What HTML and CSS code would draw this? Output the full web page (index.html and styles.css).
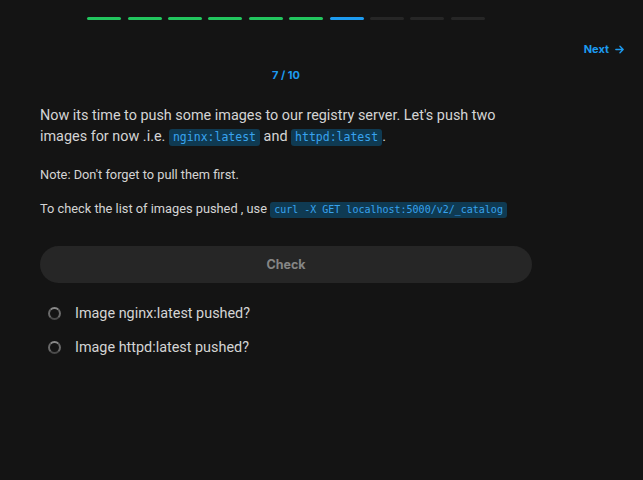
FILE: index.html
```html
<!DOCTYPE html>
<html>
<head>
<meta charset="utf-8">
<link rel="stylesheet" href="styles.css">
</head>
<body>
<div class="page">
  <div class="progress">
    <span class="seg done"></span><span class="seg done"></span><span class="seg done"></span><span class="seg done"></span><span class="seg done"></span><span class="seg done"></span><span class="seg current"></span><span class="seg"></span><span class="seg"></span><span class="seg"></span>
  </div>
  <div class="nav">
    <a class="next">Next
      <svg width="11" height="11" viewBox="0 0 12 12" fill="none" stroke="currentColor" stroke-width="1.5" stroke-linecap="round" stroke-linejoin="round"><path d="M2 6h8M6.5 2.5L10 6l-3.5 3.5"/></svg>
    </a>
  </div>
  <div class="counter">7 / 10</div>
  <div class="content">
    <p class="lead">Now its time to push some images to our registry server. Let's push two images for now .i.e. <code class="c-lg">nginx:latest</code> and <code class="c-lg">httpd:latest</code>.</p>
    <p class="small">Note: Don't forget to pull them first.</p>
    <p class="small">To check the list of images pushed , use <code class="c-sm">curl -X GET localhost:5000/v2/_catalog</code></p>
    <button class="check">Check</button>
    <ul class="tasks">
      <li><span class="radio"></span>Image nginx:latest pushed?</li>
      <li><span class="radio"></span>Image httpd:latest pushed?</li>
    </ul>
  </div>
</div>
</body>
</html>
```
FILE: styles.css
```css
html, body {
  margin: 0;
  padding: 0;
  background: #141414;
  font-family: Roboto, "Noto Sans", sans-serif;
  color: #d4d4d4;
}
.page {
  width: 643px;
  height: 480px;
  box-sizing: border-box;
  padding: 17px 0 0 40px;
}
.progress {
  width: 492px;
  display: flex;
  justify-content: center;
  gap: 6.4px;
}
.seg {
  width: 34px;
  height: 3px;
  border-radius: 2px;
  background: #262626;
}
.seg.done { background: #22c55e; }
.seg.current { background: #1d9bf0; }
.nav {
  display: flex;
  justify-content: flex-end;
  padding-right: 18px;
  margin-top: 22px;
}
.next {
  display: flex;
  align-items: center;
  gap: 5px;
  font-family: Inter, sans-serif;
  font-size: 11px;
  font-weight: 700;
  color: #1d9bf0;
}
.counter {
  width: 492px;
  text-align: center;
  font-family: Inter, sans-serif;
  font-size: 11px;
  font-weight: 700;
  color: #1d9bf0;
  margin-top: 12px;
}
.content {
  width: 492px;
}
.lead {
  font-size: 14.4px;
  line-height: 21px;
  margin: 23px 0 0;
}
.small {
  font-size: 12.8px;
  line-height: 18px;
  margin: 0;
}
.lead + .small { margin-top: 19px; }
.small + .small { margin-top: 16px; }
code {
  display: inline-block;
  font-family: "DejaVu Sans Mono", monospace;
  background: #0f3a52;
  color: #38a3ee;
  border-radius: 3px;
}
.c-lg {
  font-size: 11.5px;
  line-height: 17px;
  padding: 0 4px;
}
.c-sm {
  font-size: 10px;
  line-height: 16px;
  padding: 0 4px;
}
.check {
  display: block;
  width: 492px;
  height: 37px;
  margin-top: 28px;
  border: none;
  border-radius: 19px;
  background: #262626;
  color: #858585;
  font-family: Inter, sans-serif;
  font-size: 12.5px;
  font-weight: 700;
}
.tasks {
  list-style: none;
  margin: 13px 0 0;
  padding: 0 0 0 8px;
}
.tasks li {
  display: flex;
  align-items: center;
  gap: 14px;
  font-size: 14.4px;
  height: 34px;
  color: #d4d4d4;
}
.radio {
  width: 9px;
  height: 9px;
  border-radius: 50%;
  border: 2px solid #6a6a6a;
  border-top-color: #8a8a8a;
  border-bottom-color: #4a4a4a;
}
```
